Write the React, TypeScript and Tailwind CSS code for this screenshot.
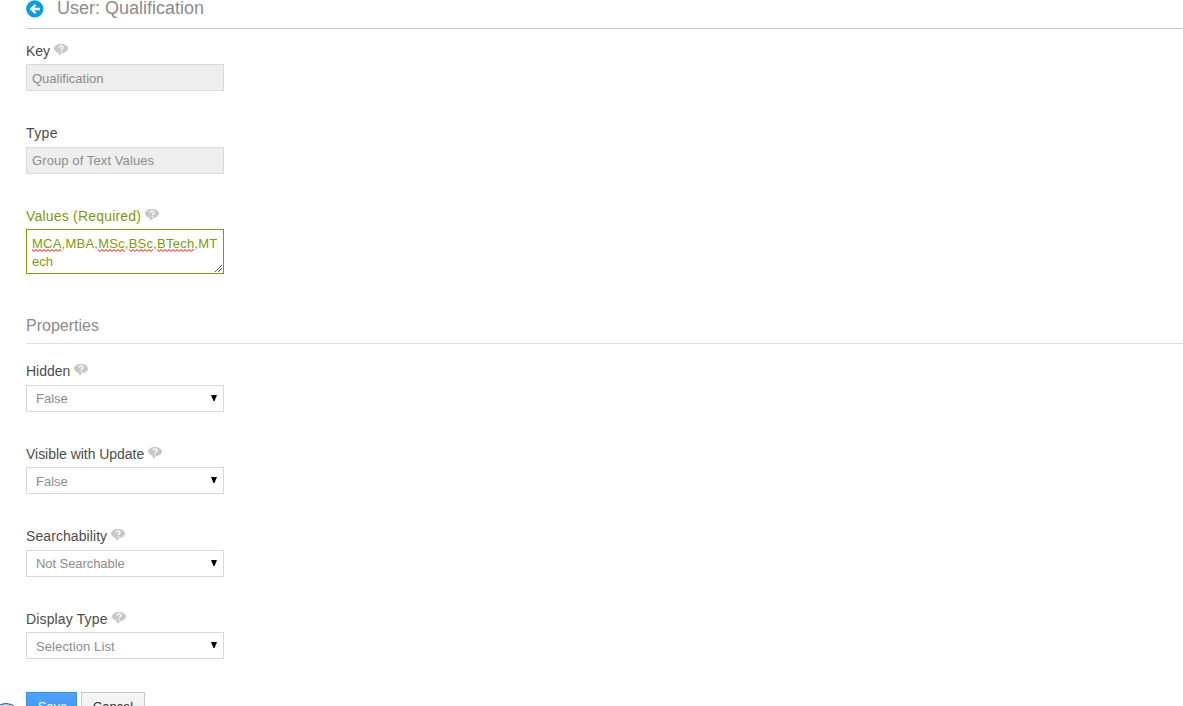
import type { ReactNode } from "react";

interface FieldProps {
  label: string;
  help?: boolean;
  required?: boolean;
  tracking?: string;
  children: ReactNode;
}

function HelpIcon() {
  return (
    <svg width="14" height="12" viewBox="0 0 14 12" className="shrink-0 mt-[3px]">
      <path
        d="M7 0C3.1 0 0 2 0 4.6c0 1.9 1.7 3.5 4.3 4.2 0.6 0.9 0.7 1.7 0.4 2.7 1.7-0.4 2.9-1.2 3.7-2.4C11.7 8.7 14 6.9 14 4.6 14 2 10.9 0 7 0z"
        fill="#c8c8c8"
      />
      <path d="M5.2 3.4c0-2.1 3.8-2.1 3.8 0 0 1.2-1.7 1.2-1.7 2.5M7.3 6.9v1.3" fill="none" stroke="#fff" strokeWidth="1.3" />
    </svg>
  );
}

function Field({ label, help, required, tracking = "", children }: FieldProps) {
  return (
    <div className="flex flex-col gap-[3.4px]">
      <div className="flex h-5 items-start gap-1">
        <label
          className={`text-sm leading-5 whitespace-nowrap ${tracking} ${required ? "text-[#7f9a0b]" : "text-[#4c4c4c]"}`}
        >
          {label}
        </label>
        {help && <HelpIcon />}
      </div>
      {children}
    </div>
  );
}

function ReadOnlyBox({ value, className = "" }: { value: string; className?: string }) {
  return (
    <div
      className={`h-[27px] w-[198px] border border-[#dadada] bg-[#eee] pl-[5px] text-[13px] text-[#8c8c8c] ${className}`}
    >
      {value}
    </div>
  );
}

function SelectBox({ value, tracking = "" }: { value: string; tracking?: string }) {
  return (
    <div className="flex h-[27px] w-[198px] items-center justify-between border border-[#d9d9d9] bg-white pr-[6px] pl-[9px] text-[13px] text-[#8c8c8c]">
      <span className={`pt-[0.9px] leading-[25px] ${tracking}`}>{value}</span>
      <svg width="6" height="6" viewBox="0 0 6 6" className="-mt-px">
        <path d="M0 0h6L3.5 6h-1z" fill="#000" />
      </svg>
    </div>
  );
}

// Word flagged by the spell checker
function Misspelled({ children }: { children: string }) {
  return (
    <span className="relative inline-block leading-[18px]">
      {children}
      <svg className="absolute top-[14px] left-0 h-[3px] w-full">
        <defs>
          <pattern id="squiggle" width="4" height="3" patternUnits="userSpaceOnUse">
            <path d="M-1 -0.5L2 2.5L5 -0.5" fill="none" stroke="#f00" strokeWidth="1" />
          </pattern>
        </defs>
        <rect width="100%" height="3" fill="url(#squiggle)" />
      </svg>
    </span>
  );
}

export default function App() {
  return (
    <div className="relative h-[706px] overflow-hidden bg-white pl-[26px] font-['Liberation_Sans',Arial,sans-serif]">
      <header className="flex h-[29px] items-start border-b border-[#c6c6c6]">
        <svg width="18" height="18" viewBox="0 0 18 18" className="shrink-0">
          <circle cx="8.8" cy="8.9" r="8.6" fill="#0a9be8" />
          <path d="M14 9H5.5M9.6 4.7L5.2 9l4.4 4.3" fill="none" stroke="#fff" strokeWidth="2.3" />
        </svg>
        <h1 className="ml-[13px] text-lg leading-4 text-[#8c8c8c]">User: Qualification</h1>
      </header>

      <section className="flex flex-col gap-[32.15px] pt-[11.65px]">
        <Field label="Key" help>
          <ReadOnlyBox value="Qualification" className="leading-[27.2px]" />
        </Field>
        <Field label="Type" tracking="tracking-[0.4px]">
          <ReadOnlyBox value="Group of Text Values" className="leading-[25.6px] tracking-[0.1px]" />
        </Field>
        <Field label="Values (Required)" help required tracking="tracking-[0.2px]">
          <div className="relative h-[45px] w-[198px] border border-[#7f9a0b] bg-white px-[5px] pt-[5px] text-[13px] leading-[18px] tracking-[0.23px] text-[#7f9a0b]">
            <div className="whitespace-nowrap">
              <Misspelled>MCA</Misspelled>,MBA,<Misspelled>MSc</Misspelled>,<Misspelled>BSc</Misspelled>,
              <Misspelled>BTech</Misspelled>,MT
            </div>
            <div className="tracking-normal">ech</div>
            <svg width="7" height="7" viewBox="0 0 7 7" className="absolute right-px bottom-px">
              <path d="M0 7l7-7M3 7l4-4" stroke="#555" strokeWidth="1" />
            </svg>
          </div>
        </Field>
      </section>

      <h2 className="mt-[40.85px] h-[29px] border-b border-[#e1e1e1] text-base leading-[22px] text-[#8c8c8c]">Properties</h2>

      <section className="mt-[17.4px] flex flex-col gap-[32.1px]">
        <Field label="Hidden" help>
          <SelectBox value="False" />
        </Field>
        <Field label="Visible with Update" help tracking="tracking-[-0.03px]">
          <SelectBox value="False" />
        </Field>
        <Field label="Searchability" help tracking="tracking-[0.08px]">
          <SelectBox value="Not Searchable" tracking="tracking-[-0.07px]" />
        </Field>
        <Field label="Display Type" help tracking="tracking-[0.14px]">
          <SelectBox value="Selection List" tracking="tracking-[0.1px]" />
        </Field>
      </section>

      <div className="mt-[32.7px] flex gap-1 text-[13px]">
        <button className="h-[29px] w-[51px] border border-[#3a8ee6] bg-linear-to-b from-[#4fa3fb] to-[#3f92ee] pl-0.5 text-white">
          Save
        </button>
        <button className="h-[29px] w-16 border border-[#c6c6c6] bg-linear-to-b from-[#f6f6f6] to-[#ededed] text-[#333]">
          Cancel
        </button>
      </div>

      {/* Floating round button, cut off by the bottom left corner */}
      <div className="absolute top-[703px] -left-[9px] size-[30px] rounded-full border border-[#235a86] bg-[#c5d9e8]" />
    </div>
  );
}
